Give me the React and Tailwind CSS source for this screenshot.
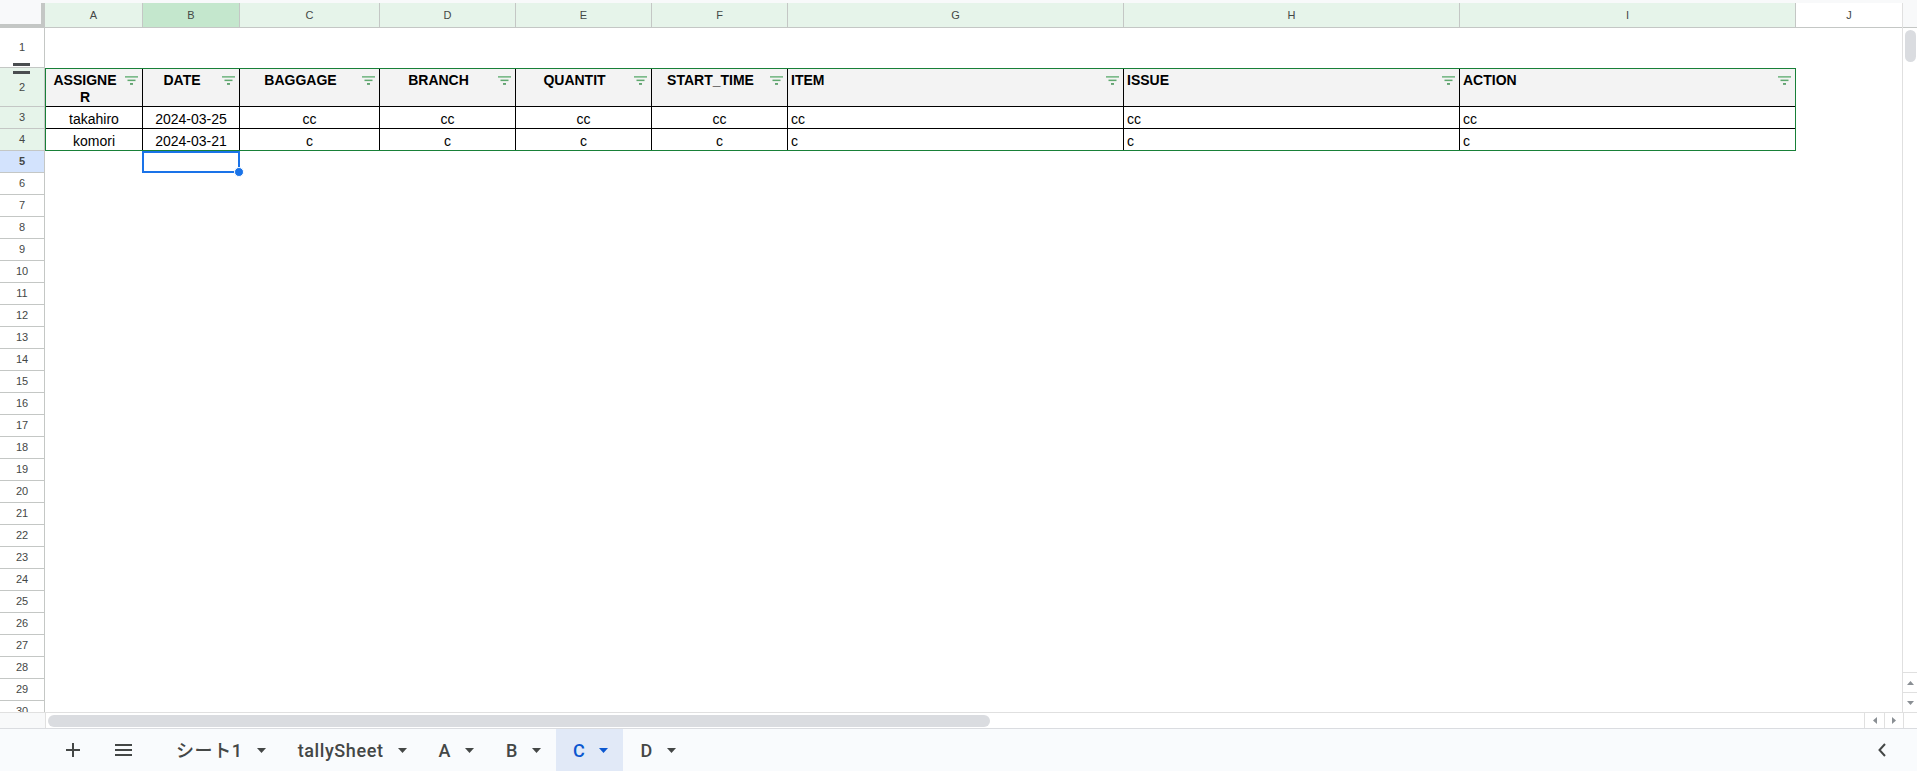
import React from "react";

const COLS = [
  { k: "A", cls: "w-[98px] bg-[#e6f4ea]" },
  { k: "B", cls: "w-[97px] bg-[#c4e7cd]" },
  { k: "C", cls: "w-[140px] bg-[#e6f4ea]" },
  { k: "D", cls: "w-[136px] bg-[#e6f4ea]" },
  { k: "E", cls: "w-[136px] bg-[#e6f4ea]" },
  { k: "F", cls: "w-[136px] bg-[#e6f4ea]" },
  { k: "G", cls: "w-[336px] bg-[#e6f4ea]" },
  { k: "H", cls: "w-[336px] bg-[#e6f4ea]" },
  { k: "I", cls: "w-[336px] bg-[#e6f4ea]" },
];

const HEADERS = ["ASSIGNE\nR", "DATE", "BAGGAGE", "BRANCH", "QUANTIT", "START_TIME", "ITEM", "ISSUE", "ACTION"];
const ROWS = [
  ["takahiro", "2024-03-25", "cc", "cc", "cc", "cc", "cc", "cc", "cc"],
  ["komori", "2024-03-21", "c", "c", "c", "c", "c", "c", "c"],
];

const TABS = [
  { n: "シート1" },
  { n: "tallySheet" },
  { n: "A" },
  { n: "B" },
  { n: "C", active: true },
  { n: "D" },
];

function rowHeaderClass(i) {
  if (i === 1) return "h-[40px] bg-white";
  if (i === 2) return "h-[39px] bg-[#e6f4ea]";
  if (i === 3 || i === 4) return "h-[22px] bg-[#e6f4ea]";
  if (i === 5) return "h-[22px] bg-[#d3e3fd] font-bold text-[#0b57d0]";
  return "h-[22px] bg-white";
}

function FilterIcon() {
  return (
    <svg width="13" height="9" viewBox="0 0 13 9" className="shrink-0 mt-[7px] mr-[4px] ml-[4px]">
      <rect x="0" y="0" width="13" height="1.7" fill="#7dbb8b" />
      <rect x="2.5" y="3.6" width="8" height="1.5" fill="#5ea86e" />
      <rect x="5" y="7.2" width="3" height="1.5" fill="#3f8f52" />
    </svg>
  );
}

function Caret({ color }) {
  return (
    <svg width="9" height="5" viewBox="0 0 9 5" className="ml-[14px]">
      <polygon points="0,0 9,0 4.5,5" fill={color} />
    </svg>
  );
}

export default function App() {
  const rowNums = Array.from({ length: 30 }, (_, i) => i + 1);

  return (
    <div className="w-[1917px] h-[771px] flex flex-col bg-white overflow-hidden font-['Liberation_Sans',Arial,sans-serif]">
      <div className="h-[3px] shrink-0 bg-[#f8f9fa]" />

      {/* sheet area */}
      <div className="flex h-[709px] shrink-0">
        <div className="flex-1 flex flex-col min-w-0 overflow-hidden">
          {/* column headers */}
          <div className="flex h-[25px] shrink-0">
            <div className="w-[45px] shrink-0 bg-[#f8f9fa] border-r-4 border-b-4 border-[#c4c7c5]" />
            {COLS.map((c) => (
              <div
                key={c.k}
                className={`${c.cls} shrink-0 border-r border-b border-[#c4c7c5] flex items-center justify-center text-[11px] text-[#444746]`}
              >
                {c.k}
              </div>
            ))}
            <div className="flex-1 border-b border-[#c4c7c5] bg-white flex items-center justify-center text-[11px] text-[#444746]">
              J
            </div>
          </div>

          <div className="flex flex-1 min-h-0">
            {/* row headers */}
            <div className="relative w-[45px] shrink-0 flex flex-col border-r border-[#c4c7c5]">
              {rowNums.map((n) => (
                <div
                  key={n}
                  className={`${rowHeaderClass(n)} shrink-0 border-b border-[#c4c7c5] flex items-center justify-center text-[11px] text-[#444746]`}
                >
                  {n}
                </div>
              ))}
              <div className="absolute left-[13px] top-[35px] w-[17px] h-[3px] bg-[#4a4d50]" />
              <div className="absolute left-[13px] top-[43px] w-[17px] h-[3px] bg-[#4a4d50]" />
            </div>

            {/* cells */}
            <div className="flex-1 flex flex-col min-w-0">
              <div className="h-[40px] shrink-0" />

              <div className="w-[1751px] shrink-0 border border-[#188038] grid grid-cols-[97px_97px_140px_136px_136px_136px_336px_336px_335px] text-[14px] text-black">
                {HEADERS.map((h, i) => (
                  <div
                    key={h}
                    className={`h-[38px] flex items-start bg-[#f3f3f3] border-b border-black ${i < 8 ? "border-r" : ""}`}
                  >
                    <div
                      className={`flex-1 pt-[3px] leading-[17px] font-bold whitespace-pre-line ${i < 6 ? "text-center pl-[3px]" : "text-left pl-[3px]"}`}
                    >
                      {h}
                    </div>
                    <FilterIcon />
                  </div>
                ))}
                {ROWS.map((r, ri) =>
                  r.map((v, i) => (
                    <div
                      key={ri + "-" + i}
                      className={`${ri === 0 ? "h-[22px] border-b" : "h-[21px]"} ${i < 8 ? "border-r" : ""} border-black pt-[4px] leading-[17px] ${i < 6 ? "text-center" : "text-left pl-[3px]"}`}
                    >
                      {v}
                    </div>
                  ))
                )}
              </div>

              {/* row 5 with selected cell */}
              <div className="h-[22px] shrink-0 flex">
                <div className="relative ml-[97px] w-[98px] h-[22px] border-2 border-[#1a73e8]">
                  <div className="absolute right-[-6px] bottom-[-6px] w-[10px] h-[10px] rounded-full bg-[#1a73e8] border border-white" />
                </div>
              </div>
            </div>
          </div>
        </div>

        {/* vertical scrollbar */}
        <div className="w-[15px] shrink-0 flex flex-col border-l border-[#e0e0e0]">
          <div className="h-[25px] shrink-0 bg-[#f8f9fa] border-b border-[#c4c7c5]" />
          <div className="flex-1 flex justify-center pt-[2px]">
            <div className="w-[11px] h-[32px] rounded-full bg-[#dadce0]" />
          </div>
          <div className="h-[20px] shrink-0 border-t border-[#e0e0e0] flex items-center justify-center">
            <svg width="7" height="4" viewBox="0 0 7 4">
              <polygon points="0,4 7,4 3.5,0" fill="#8a8f94" />
            </svg>
          </div>
          <div className="h-[20px] shrink-0 border-t border-[#e0e0e0] flex items-center justify-center">
            <svg width="7" height="4" viewBox="0 0 7 4">
              <polygon points="0,0 7,0 3.5,4" fill="#8a8f94" />
            </svg>
          </div>
        </div>
      </div>

      {/* horizontal scrollbar */}
      <div className="h-[16px] shrink-0 flex border-t border-[#e0e0e0]">
        <div className="w-[46px] shrink-0 bg-[#f8f9fa] border-r border-[#e0e0e0]" />
        <div className="flex-1 flex items-center pl-[2px]">
          <div className="w-[942px] h-[12px] rounded-full bg-[#dadce0]" />
        </div>
        <div className="w-[20px] shrink-0 border-l border-[#e0e0e0] flex items-center justify-center">
          <svg width="4" height="7" viewBox="0 0 4 7">
            <polygon points="4,0 4,7 0,3.5" fill="#8a8f94" />
          </svg>
        </div>
        <div className="w-[19px] shrink-0 border-l border-[#e0e0e0] flex items-center justify-center">
          <svg width="4" height="7" viewBox="0 0 4 7">
            <polygon points="0,0 0,7 4,3.5" fill="#8a8f94" />
          </svg>
        </div>
        <div className="w-[14px] shrink-0 border-l border-[#e0e0e0]" />
      </div>

      {/* sheet tabs */}
      <div className="h-[43px] shrink-0 flex items-stretch bg-[#f9fbfd] border-t border-[#dadce0] font-['Roboto','Noto_Sans_CJK_JP',sans-serif]">
        <div className="ml-[53px] w-[40px] flex items-center justify-center">
          <svg width="14" height="14" viewBox="0 0 14 14">
            <rect x="0" y="6" width="14" height="2" fill="#444746" />
            <rect x="6" y="0" width="2" height="14" fill="#444746" />
          </svg>
        </div>
        <div className="ml-[10px] w-[40px] flex items-center justify-center">
          <svg width="17" height="12" viewBox="0 0 17 12">
            <rect x="0" y="0" width="17" height="2" fill="#444746" />
            <rect x="0" y="5" width="17" height="2" fill="#444746" />
            <rect x="0" y="10" width="17" height="2" fill="#444746" />
          </svg>
        </div>
        <div className="ml-[16px] flex items-stretch">
          {TABS.map((t) => (
            <div
              key={t.n}
              className={`flex items-center pl-[17px] pr-[15px] ${t.active ? "bg-[#e1e9f7] text-[#0b57d0]" : "text-[#444746]"}`}
            >
              <span className="text-[18px] font-medium tracking-[0.6px]">{t.n}</span>
              <Caret color={t.active ? "#0b57d0" : "#444746"} />
            </div>
          ))}
        </div>
        <div className="ml-auto mr-[31px] flex items-center">
          <svg width="8" height="14" viewBox="0 0 8 14">
            <path d="M7 1 L1.5 7 L7 13" fill="none" stroke="#444746" strokeWidth="2" />
          </svg>
        </div>
      </div>
    </div>
  );
}
